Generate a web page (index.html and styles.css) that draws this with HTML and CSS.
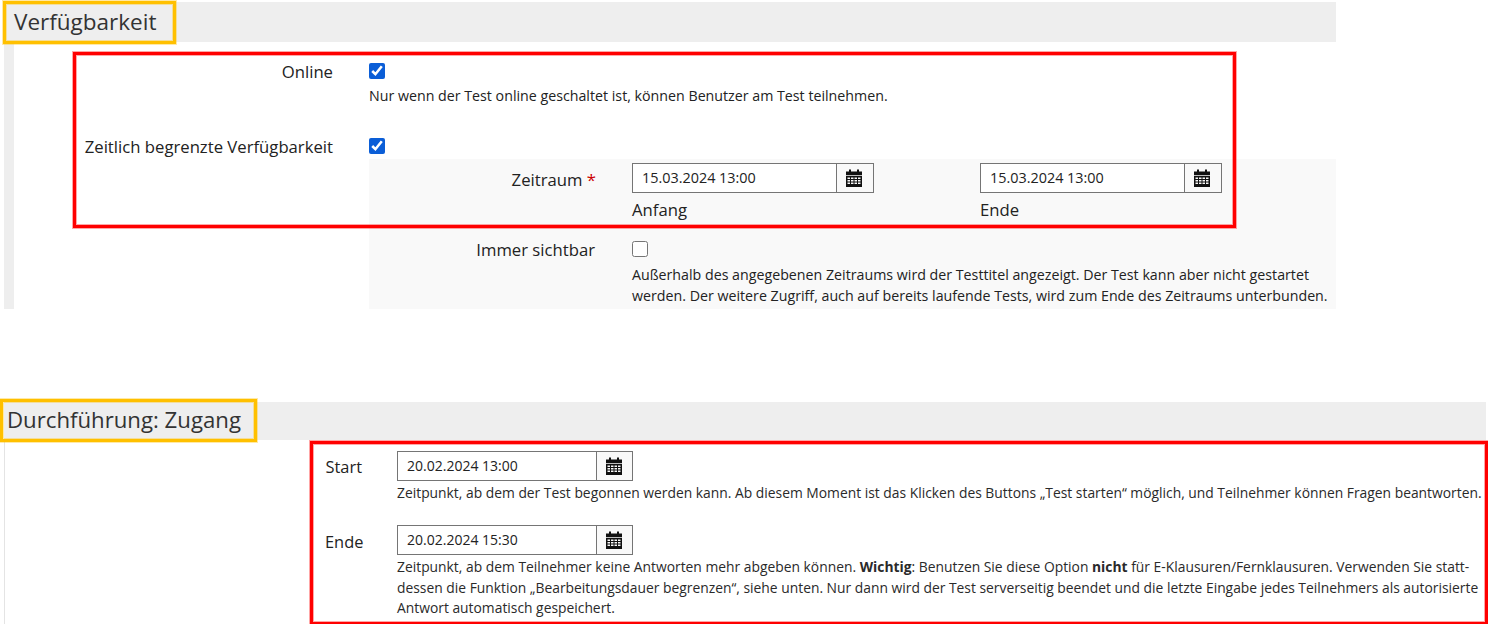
FILE: index.html
```html
<!DOCTYPE html>
<html lang="de">
<head>
<meta charset="utf-8">
<title>Verfügbarkeit</title>
<link rel="stylesheet" href="styles.css">
</head>
<body>
<svg class="defs" width="0" height="0" aria-hidden="true">
  <symbol id="cal" viewBox="0 0 16 18">
    <path fill="#111" d="M0 2.500h3V.5h2v2h6v-2h2v2h3V6H0z"/>
    <path fill="#111" fill-rule="evenodd" d="M0 6.800h16V18H0zM1.500 8.500V10h2.500V8.500zM5 8.500V10h2.500V8.500zM8.500 8.500V10H11V8.500zM12 8.500V10h2.500V8.500zM1.500 11v1.500h2.500V11zM5 11v1.500h2.500V11zM8.500 11v1.500H11V11zM12 11v1.500h2.500V11zM1.500 13.500V15h2.500v-1.500zM5 13.500V15h2.500v-1.500zM8.500 13.500V15H11v-1.500zM12 13.500V15h2.500v-1.500z"/>
  </symbol>
</svg>

<section class="sec1">
  <h2 class="head1">Verfügbarkeit</h2>
  <div class="body1">
    <div class="row row-online">
      <div class="lab">Online</div>
      <div class="val">
        <input class="chk" type="checkbox" checked>
        <p class="note">Nur wenn der Test online geschaltet ist, können Benutzer am Test teilnehmen.</p>
      </div>
    </div>
    <div class="row row-limit">
      <div class="lab">Zeitlich begrenzte Verfügbarkeit</div>
      <div class="val"><input class="chk" type="checkbox" checked></div>
    </div>
    <div class="panel">
      <div class="sub sub-time">
        <div class="sublab">Zeitraum <span class="req">*</span></div>
        <div class="dates">
          <div class="datecol">
            <div class="field"><span class="ftext">15.03.2024 13:00</span><span class="fbtn"><svg class="ico"><use href="#cal"/></svg></span></div>
            <div class="cap">Anfang</div>
          </div>
          <div class="datecol">
            <div class="field"><span class="ftext">15.03.2024 13:00</span><span class="fbtn"><svg class="ico"><use href="#cal"/></svg></span></div>
            <div class="cap">Ende</div>
          </div>
        </div>
      </div>
      <div class="sub sub-vis">
        <div class="sublab">Immer sichtbar</div>
        <div class="visval">
          <input class="chk" type="checkbox">
          <p class="note vis">Außerhalb des angegebenen Zeitraums wird der Testtitel angezeigt. Der Test kann aber nicht gestartet<br>werden. Der weitere Zugriff, auch auf bereits laufende Tests, wird zum Ende des Zeitraums unterbunden.</p>
        </div>
      </div>
    </div>
  </div>
  <div class="mark-y y1"></div>
  <div class="mark-r r1"></div>
</section>

<section class="sec2">
  <h2 class="head2">Durchführung: Zugang</h2>
  <div class="body2">
    <div class="row2 start">
      <div class="lab2">Start</div>
      <div class="val2">
        <div class="field f2"><span class="ftext">20.02.2024 13:00</span><span class="fbtn"><svg class="ico"><use href="#cal"/></svg></span></div>
        <p class="note2">Zeitpunkt, ab dem der Test begonnen werden kann. Ab diesem Moment ist das Klicken des Buttons „Test starten“ möglich, und Teilnehmer können Fragen beantworten.</p>
      </div>
    </div>
    <div class="row2 end">
      <div class="lab2">Ende</div>
      <div class="val2">
        <div class="field f2"><span class="ftext">20.02.2024 15:30</span><span class="fbtn"><svg class="ico"><use href="#cal"/></svg></span></div>
        <p class="note2">Zeitpunkt, ab dem Teilnehmer keine Antworten mehr abgeben können. <b>Wichtig</b>: Benutzen Sie diese Option <b>nicht</b> für E-Klausuren/Fernklausuren. Verwenden Sie statt-<br>dessen die Funktion „Bearbeitungsdauer begrenzen“, siehe unten. Nur dann wird der Test serverseitig beendet und die letzte Eingabe jedes Teilnehmers als autorisierte<br>Antwort automatisch gespeichert.</p>
      </div>
    </div>
  </div>
  <div class="mark-y y2"></div>
  <div class="mark-r r2"></div>
</section>
</body>
</html>
```

FILE: styles.css
```css
* { box-sizing: border-box; }
html, body { margin: 0; padding: 0; }
body {
  width: 1488px;
  height: 624px;
  overflow: hidden;
  background: #fff;
  color: #222;
  font-family: "Open Sans", "Noto Sans", sans-serif;
  font-size: 16.7px;
  position: relative;
}
.defs { position: absolute; }
p, h2 { margin: 0; font-weight: 400; }

.sec1 { margin: 2px 152px 0 4px; height: 307px; }
.head1 {
  height: 40px;
  padding: 5px 0 0 10px;
  background: #eee;
  color: #333;
  font-size: 22.5px;
  line-height: 30px;
}
.body1 { height: 267px; border-left: 10px solid #eee; }

.row { display: grid; grid-template-columns: 319px 1fr; column-gap: 36px; }
.row-online { height: 94px; padding-top: 19px; }
.row-limit { height: 23px; }
.lab { text-align: right; line-height: 22px; }
.val { line-height: 0; }
.chk {
  display: block;
  width: 16px;
  height: 16px;
  margin: 2px 0 0;
  accent-color: #0b5ed7;
}
.note { font-size: 14.22px; line-height: 21px; margin-top: 6px; }

.panel {
  margin-left: 355px;
  height: 150px;
  background: #f9f9f9;
  padding-top: 4px;
}
.sub { display: grid; grid-template-columns: 226px 1fr; column-gap: 37px; }
.sub-time { height: 76px; }
.sublab { text-align: right; line-height: 22px; }
.sub-time .sublab { padding-top: 6px; }
.req { color: #c00; margin-right: -1px; }
.dates { display: flex; gap: 106px; }
.datecol { width: 242px; }
.cap { margin-top: 5px; line-height: 24px; }

.field {
  display: flex;
  height: 30px;
  width: 100%;
  border: 1px solid #757575;
  background: #fff;
  font-size: 14.4px;
  line-height: 28px;
}
.ftext { flex: 1; padding-left: 9px; }
.fbtn {
  flex: none;
  width: 37px;
  padding-right: 3px;
  display: flex;
  align-items: center;
  justify-content: center;
  border-left: 1px solid #757575;
  background: #f9f9f9;
}
.ico { width: 16px; height: 18px; }
.note.vis { margin-top: 7px; }

.sec2 { position: relative; margin: 93px 2px 0 4px; height: 222px; }
.head2 {
  height: 38px;
  padding: 0 0 0 3px;
  background: #eee;
  color: #333;
  font-size: 22.2px;
  line-height: 36px;
}
.body2 { height: 184px; border-left: 1px solid #e4e4e4; padding: 11px 0 0 320px; }
.row2 { display: flex; }
.start { height: 74px; }
.lab2 { width: 72px; flex: none; padding: 5px 35px 0 0; text-align: right; line-height: 22px; font-size: 16.4px; }
.end .lab2 { padding-top: 6px; }
.val2 { flex: 1; min-width: 0; }
.f2 { width: 236px; font-size: 14px; }
.f2 .fbtn { width: 36px; padding-right: 1px; }
.note2 { font-size: 13.85px; line-height: 20.5px; margin-top: 2px; white-space: nowrap; color: #2a2a2a; }

.mark-y, .mark-r { position: absolute; pointer-events: none; border-width: 3px; border-style: solid; }
.mark-y { border-color: #ffc000; box-shadow: 0 0 0 1px rgba(255, 192, 0, .35), inset 0 0 0 1px rgba(255, 192, 0, .35); }
.mark-r { border-color: #f00; box-shadow: 0 0 0 1px rgba(255, 0, 0, .35), inset 0 0 0 1px rgba(255, 0, 0, .35); }
.y1 { left: 3px; top: 1px; width: 173px; height: 43px; }
.r1 { left: 73px; top: 52px; width: 1163px; height: 176px; }
.y2 { left: -4px; top: -3px; width: 257px; height: 43px; }
.r2 { left: 306px; top: 39px; width: 1178px; height: 184px; }
```
